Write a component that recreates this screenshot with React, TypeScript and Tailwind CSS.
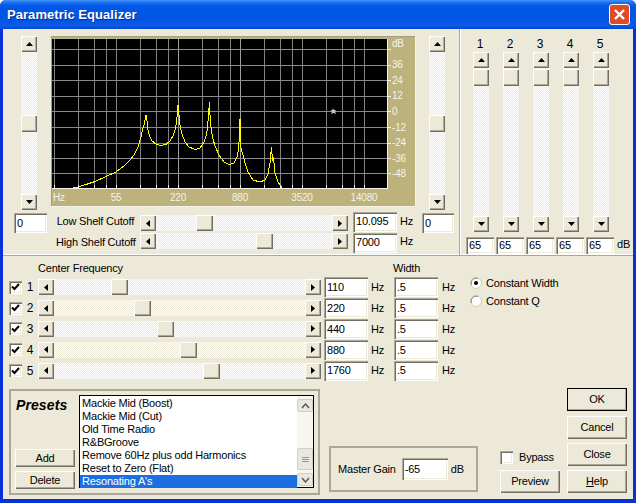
import React from "react";

const raised = "bg-[#ece9d8] shadow-[inset_1px_1px_0_#ffffff,inset_-1px_-1px_0_#716f64,inset_-2px_-2px_0_#aca899]";
const track = "bg-[repeating-conic-gradient(#ffffff_0_25%,#ece9d8_0_50%)] bg-[length:2px_2px]";

function Arrow({ dir }: { dir: "up" | "down" | "left" | "right" }) {
  const pts = {
    up: "0,4 3.5,0 7,4",
    down: "0,0 7,0 3.5,4",
    left: "4,0 4,7 0,3.5",
    right: "0,0 0,7 4,3.5",
  }[dir];
  const vertical = dir === "up" || dir === "down";
  return (
    <svg width={vertical ? 7 : 4} height={vertical ? 4 : 7} className="block">
      <polygon points={pts} fill="#000" />
    </svg>
  );
}

function ArrowBtn({ dir }: { dir: "up" | "down" | "left" | "right" }) {
  return (
    <div className={`${raised} w-[16px] h-[16px] shrink-0 flex items-center justify-center`}>
      <Arrow dir={dir} />
    </div>
  );
}

function HScroll({ w, pos }: { w: number; pos: number }) {
  return (
    <div className="flex shrink-0 h-[16px]" style={{ width: w }}>
      <ArrowBtn dir="left" />
      <div className={`${track} flex-1 flex`}>
        <div style={{ width: pos }} />
        <div className={`${raised} w-[17px] h-[16px]`} />
      </div>
      <ArrowBtn dir="right" />
    </div>
  );
}

function VScroll({ h, pos }: { h: number; pos: number }) {
  return (
    <div className="flex flex-col shrink-0 w-[16px]" style={{ height: h }}>
      <ArrowBtn dir="up" />
      <div className={`${track} flex-1 flex flex-col`}>
        <div style={{ height: pos }} />
        <div className={`${raised} w-[16px] h-[17px]`} />
      </div>
      <ArrowBtn dir="down" />
    </div>
  );
}

function Input({ v, w, h = 20 }: { v: string; w: number; h?: number }) {
  return (
    <div
      className="shrink-0 bg-white pl-[3px] flex items-center shadow-[inset_1px_1px_0_#aca899,inset_2px_2px_0_#716f64,inset_-1px_-1px_0_#ffffff,inset_-2px_-2px_0_#ece9d8]"
      style={{ width: w, height: h }}
    >
      {v}
    </div>
  );
}

function Check({ on }: { on: boolean }) {
  return (
    <div className="w-[13px] h-[13px] shrink-0 bg-white shadow-[inset_1px_1px_0_#aca899,inset_2px_2px_0_#716f64,inset_-1px_-1px_0_#ffffff,inset_-2px_-2px_0_#ece9d8] flex items-center justify-center">
      {on && (
        <svg width="9" height="8" className="block">
          <polyline points="1,3.5 3.5,6 8,1" fill="none" stroke="#000" strokeWidth="2" />
        </svg>
      )}
    </div>
  );
}

function Radio({ on }: { on: boolean }) {
  return (
    <svg width="12" height="12" className="block shrink-0">
      <circle cx="6" cy="6" r="5.5" fill="#fff" stroke="#cfccbc" />
      <path d="M1.5 8 A5 5 0 0 1 8 1.5" fill="none" stroke="#8a887a" />
      {on && <circle cx="6" cy="6" r="2" fill="#000" />}
    </svg>
  );
}

function Btn({ label, w = 60, h = 23, def = false, children }: { label?: string; w?: number; h?: number; def?: boolean; children?: React.ReactNode }) {
  return (
    <div
      className={`${raised} flex items-center justify-center shrink-0 ${def ? "outline outline-1 -outline-offset-1 outline-black" : ""}`}
      style={{ width: w, height: h }}
    >
      {label}
      {children}
    </div>
  );
}

const curve =
  "73,188 78,187 86,184.5 95,181.5 105,177 116,172 124,166 130,160 134,155 138,147 141,137 143,128 144.5,123 146,115 147,121 147.5,123 148,130 149.5,136 152,141 156,144 161,145.5 166,144.5 170,141 173,136 175,130 176.5,122 177.5,112 178,105 179,115 180,125 182,134 185,142 189,147 195,149.5 200,148 204,142 206.5,135 207.5,128 208.5,115 209.5,102 210,115 211,127 212.5,137 215,146 219,155 224,162 229,164.5 234,163 237,157 238.5,150 239.5,135 240,119 240.5,135 241,148 243,155 245,163 248,172 253,180 260,182 265,180 268,174 270,163 271.5,147 272.5,160 273.5,158 275,173 278,182 282,188";

const vLines = [54, 78, 94, 106, 116, 140, 156, 168, 178, 202, 218, 230, 240, 264, 280, 292, 302, 326, 342, 354, 364];
const hLines = [49, 64.5, 80, 96, 111, 127, 143, 158, 173];
const dbLabels: [string, number][] = [
  ["36", 64],
  ["24", 80],
  ["12", 95],
  ["0", 111],
  ["-12", 127],
  ["-24", 142],
  ["-36", 158],
  ["-48", 173],
];
const hzLabels: [string, number][] = [
  ["Hz", 59],
  ["55", 116],
  ["220", 178],
  ["880", 240],
  ["3520", 302],
  ["14080", 364],
];

function Chart() {
  return (
    <svg viewBox="51 36 365 171" width="365" height="171" className="block shrink-0">
      <rect x="51" y="36" width="365" height="171" fill="#bdb27c" />
      <rect x="51" y="36" width="365" height="1" fill="#a09c88" />
      <rect x="51" y="36" width="1" height="171" fill="#a09c88" />
      <rect x="415" y="36" width="1" height="171" fill="#f5f3ea" />
      <rect x="51" y="206" width="365" height="1" fill="#f5f3ea" />
      <rect x="52" y="39" width="335" height="149" fill="#000" />
      {vLines.map((x) => (
        <rect key={x} x={x} y="39" width="1" height="149" fill={x === 178 || x === 240 ? "#a0a0a0" : "#808080"} />
      ))}
      {hLines.map((y) => (
        <rect key={y} x="52" y={Math.round(y)} width="335" height="1" fill="#8a8a8a" />
      ))}
      <polyline points={curve} fill="none" stroke="#ffff00" strokeWidth="1" shapeRendering="crispEdges" />
      <polygon points="333,108 334,110 336,110 335,111.5 336,114 333.5,113 331,114 332,111.5 330.5,110 332.5,110" fill="#c4c4b4" />
      <rect x="52" y="188" width="336" height="1" fill="#f5f3ea" />
      <rect x="387" y="39" width="1" height="150" fill="#f5f3ea" />
      {vLines.map((x) => (
        <rect key={x} x={x} y="185" width="1" height="3" fill="#f5f3ea" />
      ))}
      {hLines.map((y) => (
        <rect key={y} x="387" y={Math.round(y)} width="4" height="1" fill="#f5f3ea" />
      ))}
      <g fill="#f5f3ea" fontFamily="'Liberation Sans', sans-serif" fontSize="10">
        <text x="392" y="47">dB</text>
        {dbLabels.map(([t, y]) => (
          <text key={t} x="392" y={y + 3.5}>
            {t}
          </text>
        ))}
        {hzLabels.map(([t, x]) => (
          <text key={t} x={x} y="201" textAnchor="middle">
            {t}
          </text>
        ))}
      </g>
    </svg>
  );
}

const presets = [
  "Mackie Mid (Boost)",
  "Mackie Mid (Cut)",
  "Old Time Radio",
  "R&BGroove",
  "Remove 60Hz plus odd Harmonics",
  "Reset to Zero (Flat)",
  "Resonating A's",
];

const bands = [
  { n: "1", f: "110", pos: 57 },
  { n: "2", f: "220", pos: 80 },
  { n: "3", f: "440", pos: 103 },
  { n: "4", f: "880", pos: 126 },
  { n: "5", f: "1760", pos: 149 },
];

export default function App() {
  return (
    <div className="w-[636px] h-[503px] flex flex-col bg-[#0831d9] rounded-t-[6px] overflow-hidden text-black text-[11px] tracking-[-0.2px] font-['Liberation_Sans',sans-serif]">
      <div className="h-[29px] shrink-0 flex items-center justify-between pl-[7px] pr-[6px] bg-[linear-gradient(180deg,#3f93f8_0px,#1a6bf0_3px,#0058e6_6px,#0055e5_20px,#0a5ce8_25px,#0047d0_29px)]">
        <span className="text-white font-bold text-[13px] tracking-[0.05px] [text-shadow:1px_1px_0_#0a2a90]">Parametric Equalizer</span>
        <div className="w-[21px] h-[21px] rounded-[3px] border border-white bg-[#e04a25] flex items-center justify-center">
          <svg width="13" height="13" className="block">
            <path d="M2 2 L11 11 M11 2 L2 11" stroke="#fff" strokeWidth="2.4" />
          </svg>
        </div>
      </div>

      <div className="flex-1 mx-[3px] mb-[4px] bg-[#ece9d8] flex flex-col">
        {/* upper area */}
        <div className="flex h-[227px] shrink-0 shadow-[inset_0_-1px_0_#ffffff] border-b border-[#aca899]">
          <div className="w-[457px] shrink-0 pt-[7px] flex flex-col shadow-[1px_0_0_#ffffff] border-r border-[#aca899]">
            <div className="flex pl-[18px] h-[175px]">
              <VScroll h={174} pos={63} />
              <div className="w-[14px]" />
              <Chart />
              <div className="w-[13px]" />
              <VScroll h={174} pos={63} />
            </div>
            <div className="flex pl-[11px]">
              <div className="pt-[2px]">
                <Input v="0" w={33} />
              </div>
              <div className="w-[9px]" />
              <div className="flex flex-col w-[366px]">
                <div className="flex items-center h-[21px]">
                  <div className="w-[78px] text-right mr-[6px] whitespace-nowrap">Low Shelf Cutoff</div>
                  <div className="pt-[3px]"><HScroll w={208} pos={40} /></div>
                  <div className="ml-[5px]"><Input v="10.095" w={44} /></div>
                  <div className="ml-[3px]">Hz</div>
                </div>
                <div className="flex items-center h-[21px]">
                  <div className="w-[78px] text-right mr-[6px] whitespace-nowrap">High Shelf Cutoff</div>
                  <div className="pb-[3px]"><HScroll w={208} pos={100} /></div>
                  <div className="ml-[5px]"><Input v="7000" w={44} /></div>
                  <div className="ml-[3px] pb-[3px]">Hz</div>
                </div>
              </div>
              <div className="pt-[2px]">
                <Input v="0" w={32} />
              </div>
            </div>
          </div>
          <div className="flex-1 flex pl-[6px] pt-[6px]">
            {[1, 2, 3, 4, 5].map((n) => (
              <div key={n} className="w-[30px] flex flex-col">
                <div className="h-[17px] w-[28px] text-center text-[12px]">{n}</div>
                <div className="pl-[7px]">
                  <VScroll h={180} pos={1} />
                </div>
                <div className="mt-[5px]">
                  <Input v="65" w={28} h={17} />
                </div>
              </div>
            ))}
            <div className="self-end mb-[3px] ml-[1px]">dB</div>
          </div>
        </div>

        {/* band rows */}
        <div className="flex h-[125px] shrink-0">
          <div className="flex flex-col">
            <div className="flex h-[21px] items-center pl-[35px] pt-[3px]">
              <div className="w-[355px]">Center Frequency</div>
              <div>Width</div>
            </div>
            {bands.map((b) => (
              <div key={b.n} className="flex items-center h-[21px] pl-[6px]">
                <Check on />
                <div className="w-[16px] text-center text-[12px] shrink-0">{b.n}</div>
                <HScroll w={283} pos={b.pos} />
                <div className="ml-[3px]"><Input v={b.f} w={44} /></div>
                <div className="w-[26px] pl-[3px]">Hz</div>
                <Input v=".5" w={44} />
                <div className="pl-[4px]">Hz</div>
              </div>
            ))}
          </div>
          <div className="flex flex-col gap-[6px] pl-[15px] pt-[21px]">
            <div className="flex items-center gap-[4px] h-[12px]">
              <Radio on />
              <span>Constant Width</span>
            </div>
            <div className="flex items-center gap-[4px] h-[12px]">
              <Radio on={false} />
              <span>Constant Q</span>
            </div>
          </div>
        </div>

        {/* lower area */}
        <div className="flex pl-[6px] pt-[8px]">
          <div className="w-[311px] h-[106px] shrink-0 border-2 border-[#aca899] flex p-[4px]">
            <div className="w-[62px] flex flex-col justify-between shrink-0">
              <div className="font-bold italic text-[14px] pl-[1px] tracking-[0.1px]">Presets</div>
              <div className="flex flex-col gap-[4px]">
                <Btn label="Add" h={18} />
                <Btn label="Delete" h={18} />
              </div>
            </div>
            <div className="w-[235px] h-[93px] ml-[2px] border border-black bg-white flex">
              <div className="flex-1 flex flex-col pt-[1px]">
                {presets.map((p, i) => (
                  <div
                    key={p}
                    className={`h-[13px] leading-[13px] pl-[2px] whitespace-nowrap ${i === 6 ? "bg-[#1c6fe0] text-white h-[15px]" : ""}`}
                  >
                    {p}
                  </div>
                ))}
              </div>
              <div className="w-[16px] bg-[#f6f5f0] flex flex-col justify-between pt-[3px] pb-[1px]">
                <div className="h-[13px] bg-[#e8e8e0] border border-[#d0cfc4] rounded-[2px] flex items-center justify-center">
                  <svg width="9" height="6" className="block"><polyline points="1,5 4.5,1 8,5" fill="none" stroke="#5a5a50" strokeWidth="1.5" /></svg>
                </div>
                <div className="flex flex-col gap-[3px]">
                  <div className="h-[22px] bg-[#e8e8e0] border border-[#d0cfc4] rounded-[2px] flex items-center justify-center">
                    <svg width="7" height="7" className="block"><path d="M0 1.5 H7 M0 3.5 H7 M0 5.5 H7" stroke="#9a9a90" /></svg>
                  </div>
                  <div className="h-[13px] bg-[#e8e8e0] border border-[#d0cfc4] rounded-[2px] flex items-center justify-center">
                    <svg width="9" height="6" className="block"><polyline points="1,1 4.5,5 8,1" fill="none" stroke="#5a5a50" strokeWidth="1.5" /></svg>
                  </div>
                </div>
              </div>
            </div>
          </div>
          <div className="w-[149px] h-[46px] ml-[9px] mt-[57px] shrink-0 border-2 border-[#aca899] flex items-center pl-[7px]">
            <span className="mr-[6px] whitespace-nowrap">Master Gain</span>
            <Input v="-65" w={46} h={22} />
            <span className="ml-[3px]">dB</span>
          </div>
          <div className="flex flex-col ml-[22px] pt-[62px] w-[60px]">
            <div className="flex items-center gap-[6px] h-[13px]">
              <Check on={false} />
              <span>Bypass</span>
            </div>
            <div className="mt-[6px]">
              <Btn label="Preview" />
            </div>
          </div>
          <div className="flex flex-col gap-[4px] ml-[7px] mt-[-1px]">
            <div className="mb-[1px]"><Btn label="OK" def /></div>
            <Btn label="Cancel" />
            <Btn label="Close" />
            <Btn>
              <span><span className="underline">H</span>elp</span>
            </Btn>
          </div>
        </div>
      </div>
    </div>
  );
}
